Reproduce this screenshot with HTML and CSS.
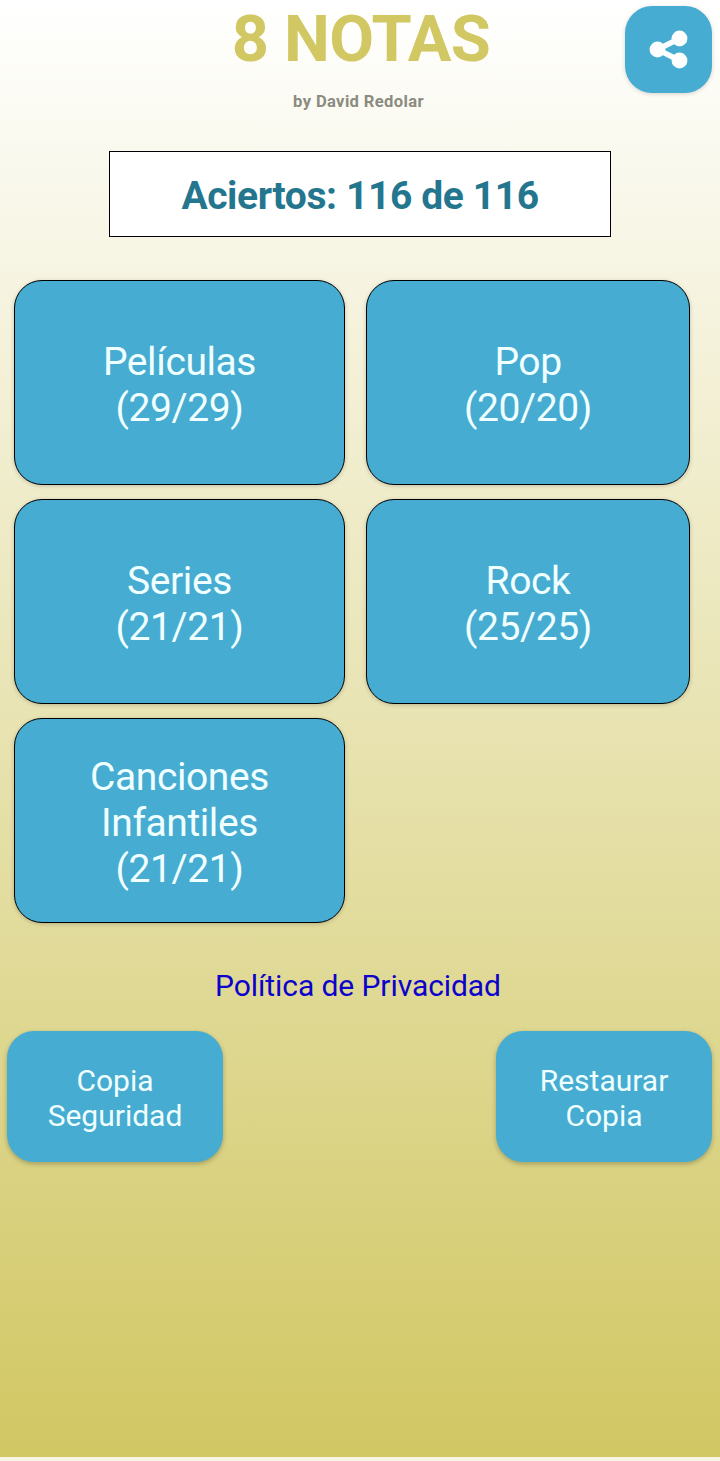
FILE: index.html
```html
<!DOCTYPE html>
<html lang="es">
<head>
<meta charset="utf-8">
<title>8 Notas</title>
<link rel="stylesheet" href="styles.css">
</head>
<body>
<main class="screen">
  <header class="header">
    <h1 class="title">8 NOTAS</h1>
    <p class="author">by David Redolar</p>
    <button class="share" aria-label="Compartir">
      <svg class="share-icon" viewBox="0 0 40 40">
        <path d="M30.5 8.5 8.5 19.5l22 11" fill="none" stroke="#fff" stroke-width="5.4"/>
        <circle cx="8.5" cy="19.5" r="7.9" fill="#fff"/>
        <circle cx="30.5" cy="8.5" r="7.9" fill="#fff"/>
        <circle cx="30.5" cy="30.5" r="7.9" fill="#fff"/>
      </svg>
    </button>
  </header>
  <div class="score">Aciertos: 116 de 116</div>
  <section class="categories">
    <button class="category"><span>Películas</span><span>(29/29)</span></button>
    <button class="category"><span>Pop</span><span>(20/20)</span></button>
    <button class="category"><span>Series</span><span>(21/21)</span></button>
    <button class="category"><span>Rock</span><span>(25/25)</span></button>
    <button class="category"><span>Canciones</span><span>Infantiles</span><span>(21/21)</span></button>
  </section>
  <a class="privacy">Política de Privacidad</a>
  <footer class="actions">
    <button class="action"><span>Copia</span><span>Seguridad</span></button>
    <button class="action"><span>Restaurar</span><span>Copia</span></button>
  </footer>
</main>
</body>
</html>
```
FILE: styles.css
```css
* {
  box-sizing: border-box;
}

body {
  margin: 0;
  background: #f8f5e6;
  font-family: Roboto, sans-serif;
}

button {
  border: 0;
  padding: 0;
  background: #46acd1;
  color: #f0ffff;
  font-family: inherit;
}

.screen {
  display: flex;
  flex-direction: column;
  width: 720px;
  height: 1457px;
  background: linear-gradient(#fff, #d1c763);
}

.header {
  position: relative;
  height: 151px;
  padding-top: 1px;
  text-align: center;
}

.title {
  margin: 0;
  padding-left: 2px;
  color: #d1c763;
  font-size: 65px;
  line-height: 76px;
  font-weight: 700;
  letter-spacing: -0.6px;
}

.author {
  margin: 15px 3px 0 0;
  color: #8b8b80;
  font-size: 16.6px;
  line-height: 20px;
  font-weight: 700;
  letter-spacing: 0.35px;
}

.share {
  position: absolute;
  top: 6px;
  right: 8px;
  display: flex;
  align-items: center;
  justify-content: center;
  width: 87px;
  height: 87px;
  border-radius: 27px;
  box-shadow: 0 1px 4px rgb(0 0 0 / 16%);
}

.share-icon {
  width: 40px;
  height: 40px;
}

.score {
  width: 502px;
  height: 86px;
  margin: 0 auto;
  padding-top: 1px;
  border: 1px solid #000;
  background: #fff;
  color: #24768f;
  font-size: 39px;
  line-height: 86px;
  font-weight: 700;
  letter-spacing: -0.4px;
  text-align: center;
}

.categories {
  display: grid;
  grid-template-columns: 331px 324px;
  grid-auto-rows: 205px;
  gap: 14px 21px;
  margin: 43px 0 0 14px;
}

.category,
.action {
  display: flex;
  flex-direction: column;
  align-items: center;
  justify-content: center;
}

.category {
  border: 1px solid #000;
  border-radius: 28px;
  box-shadow: 0 1px 4px rgb(0 0 0 / 20%);
  padding-top: 5px;
  font-size: 39px;
  line-height: 46px;
  letter-spacing: -0.42px;
}

.privacy {
  margin: 45px 4px 0 0;
  color: #0c02cc;
  font-size: 30px;
  line-height: 35px;
  letter-spacing: -0.08px;
  text-align: center;
}

.actions {
  display: flex;
  justify-content: space-between;
  margin: 28px 8px 0 7px;
}

.action {
  width: 216px;
  height: 131px;
  border-radius: 27px;
  box-shadow: 0 2px 5px rgb(0 0 0 / 25%);
  padding-top: 3px;
  font-size: 30px;
  line-height: 35px;
}
```
